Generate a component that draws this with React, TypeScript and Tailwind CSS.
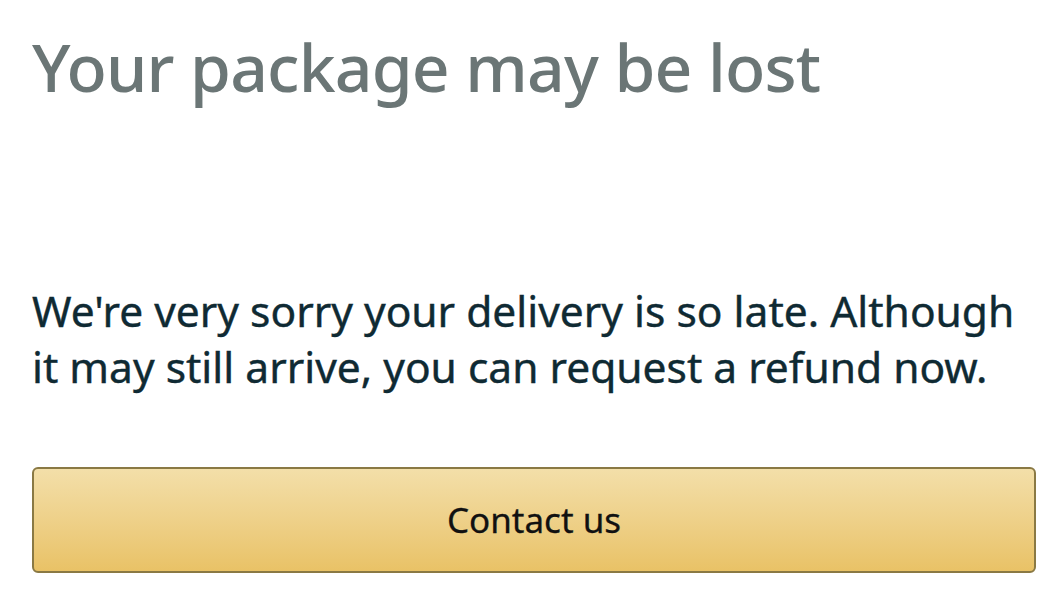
export default function App() {
  return (
    <div className="w-[1056px] h-[594px] bg-white pl-8 pr-5 font-['Noto_Sans',sans-serif] overflow-hidden">
      <h1 className="pt-[22px] text-[66px] leading-[88px] font-medium text-[#6b7676] tracking-[-0.8px]">
        Your package may be lost
      </h1>
      <p className="mt-[173px] text-[42.5px] leading-[56px] text-[#0f2a33] [-webkit-text-stroke:0.4px_#0f2a33]">
        We're very sorry your delivery is so late. Although it may still arrive, you can request a refund now.
      </p>
      <button className="mt-[72px] w-full h-[106px] rounded-[6px] border-2 border-[#8a7944] bg-gradient-to-b from-[#f3dfa9] to-[#e9c266] text-[35px] text-[#111] [-webkit-text-stroke:0.3px_#111]">
        Contact us
      </button>
    </div>
  )
}
